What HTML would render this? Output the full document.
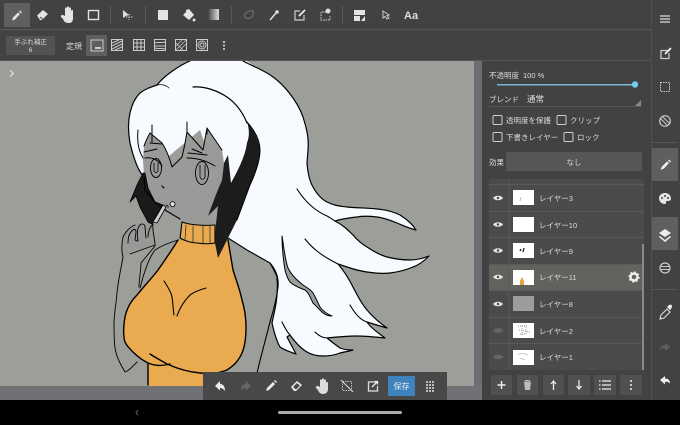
<!DOCTYPE html>
<html><head><meta charset="utf-8">
<style>
html,body{margin:0;padding:0;background:#000;width:680px;height:425px;overflow:hidden}
svg{display:block}
text{font-family:"Liberation Sans","Noto Sans CJK JP",sans-serif;fill:#dcdcdc}
.l{font-size:7.5px}
</style></head><body>
<svg width="680" height="425" viewBox="0 0 680 425" xmlns="http://www.w3.org/2000/svg">
<defs><clipPath id="c"><rect x="0" y="61" width="474" height="325"/></clipPath></defs>
<rect width="680" height="425" fill="#424242"/>
<!-- canvas -->
<rect x="0" y="61" width="482" height="339" fill="#6d6d75"/>
<rect x="0" y="386" width="482" height="14" fill="#6f7174"/>
<rect x="0" y="61" width="474" height="325" fill="#9c9e9a"/>
<g clip-path="url(#c)" stroke-linejoin="round" stroke-linecap="round">
<!-- white hair fill -->
<path d="M144 177C139 172 134 160 130 143C128 130 128 122 130 113C132 104 135 98 140 93C145 89 151 87 157 85C164 76 180 64 197 58H243C252 66 264 70 273 77C283 84 297 100 303 117C307 130 309 138 308 150L307 163C308 175 310 182 313 187C318 196 323 200 327 202C335 206 340 206 347 207C358 208 368 208 377 209C388 210 394 212 400 215C408 220 413 225 416 230C408 228 402 225 397 223C390 220 384 218 377 217C368 216 362 216 357 217C348 218 341 219 335 221C343 225 348 230 353 235C358 241 362 244 367 247C373 251 380 255 387 257C395 259 402 260 410 260C417 260 424 258 429 256C424 261 419 265 413 267C406 270 398 272 390 273C382 274 374 273 367 272C360 271 353 269 347 267L338 264C345 272 349 279 353 287C358 297 362 304 367 310C372 316 380 323 387 328C380 326 373 324 367 322C370 327 378 333 385 338C375 337 365 336 357 336C347 336 337 337 327 338C333 343 336 345 340 348C345 350 349 350 353 350C349 351 345 352 340 353C335 355 329 356 323 356C317 356 312 355 307 352C300 348 295 342 290 335L287 337L296 354C288 351 284 350 280 347C276 340 274 332 272 323C274 313 277 303 277 293C278 285 277 281 277 277C275 271 272 267 270 263L247 250L228 238L225 200L200 130Z" fill="#f7faff"/>
<!-- white hair outline -->
<path d="M144 177C139 172 134 160 130 143C128 130 128 122 130 113C132 104 135 98 140 93C145 89 151 87 157 85C164 76 180 64 197 58M243 61C252 66 264 70 273 77C283 84 297 100 303 117C307 130 309 138 308 150L307 163C308 175 310 182 313 187C318 196 323 200 327 202C335 206 340 206 347 207C358 208 368 208 377 209C388 210 394 212 400 215C408 220 413 225 416 230C408 228 402 225 397 223C390 220 384 218 377 217C368 216 362 216 357 217C348 218 341 219 335 221C343 225 348 230 353 235C358 241 362 244 367 247C373 251 380 255 387 257C395 259 402 260 410 260C417 260 424 258 429 256C424 261 419 265 413 267C406 270 398 272 390 273C382 274 374 273 367 272C360 271 353 269 347 267L338 264C345 272 349 279 353 287C358 297 362 304 367 310C372 316 380 323 387 328C380 326 373 324 367 322C370 327 378 333 385 338C375 337 365 336 357 336C347 336 337 337 327 338C333 343 336 345 340 348C345 350 349 350 353 350C349 351 345 352 340 353C335 355 329 356 323 356C317 356 312 355 307 352C300 348 295 342 290 335L287 337L296 354C288 351 284 350 280 347C276 340 274 332 272 323C274 313 277 303 277 293C278 285 277 281 277 277C275 271 272 267 270 263" fill="none" stroke="#000" stroke-width="1.200"/>
<!-- face -->
<path d="M144 177L143 160L144 146Q147 138 150 133L162 143Q168 152 172 167Q178 161 182 157Q185 145 187 132L203 150L207 128L222 150L224 163L222 180L215 197L208 216L216 224L182 222L165 210L155 202L145 190Z" fill="#9a9b99"/>
<path d="M150 133L162 143Q168 152 172 167Q178 161 182 157Q185 145 187 132L203 150L207 128L222 150" fill="none" stroke="#000" stroke-width="1"/>
<path d="M150 133Q147 138 144 146M138 130C137 140 138 150 143 158M152 125V142M187 122V132M207 128V134" fill="none" stroke="#000" stroke-width="1"/>
<path d="M150 143L162 144M144 152L157 149M145 158C151 157 158 159 162 166M188 153L207 155M187 158C197 158 207 161 215 166M192 149L202 153" fill="none" stroke="#000" stroke-width="1"/>
<ellipse cx="156" cy="168" rx="5.500" ry="9.500" fill="none" stroke="#000" stroke-width=".9"/>
<path d="M154 163V171C155 173 157 173 158 171V163" fill="none" stroke="#000" stroke-width=".8"/>
<ellipse cx="202" cy="173" rx="6.500" ry="11.500" fill="none" stroke="#000" stroke-width=".9"/>
<path d="M200 165V177C201 180 204 180 205 177V165" fill="none" stroke="#000" stroke-width=".8"/>
<path d="M162 186L164 188" stroke="#000" stroke-width="1.200"/>
<path d="M170 204C170 201 175 201 175 204C175 207 171 208 170 204Z" fill="#e4e4e4" stroke="#000" stroke-width=".8"/>
<path d="M166 205L168 206L168 208" fill="none" stroke="#000" stroke-width=".7"/>
<!-- hand, drawn before the dark strand -->
<path d="M123 257C121 250 122 242 123 237C126 231 130 227 135 225C137 224 139 224 140 225C141 223 144 222 146 224C148 222 151 222 153 224L155 245L130 254Z" fill="#999a98"/>
<path d="M123 257C121 250 122 242 123 237C126 231 130 227 135 225M128 243C128 238 129 234 131 232C133 229 136 228 136 232L135 240L137 241M138 241C137 235 137 228 140 225C142 223 145 224 145 227L146 238M148 237C148 231 150 227 153 224M153 224C152 232 155 238 155 245L130 254M123 257C121 268 118 282 117 293C116 305 114 315 114 323C114 332 114 340 115 348C116 354 118 359 120 363C122 367 124 370 125 372C129 371 133 366 137 362M155 246C150 252 146 257 141 263C141 270 139 280 139 287M178 240C168 243 161 246 155 250C149 258 146 268 143 277C142 281 141 285 140 288" fill="none" stroke="#000" stroke-width=".9"/>
<!-- black left strand -->
<path d="M143 173L137 185L130 202L136 196L140 207L148 222L152 224L163 205L155 202L148 188L145 173Z" fill="#1a1a1a" stroke="#000" stroke-width=".8"/>
<path d="M144 177L145 190L155 202L165 210L180 219" fill="none" stroke="#000" stroke-width="1.100"/>
<!-- finger -->
<path d="M163 205L166 207L157 223L153 222Z" fill="#cfcfcf" stroke="#000" stroke-width=".8"/>
<!-- arm line -->
<path d="M228 238L247 250L270 263C276 270 279 278 278 287C276 305 270 320 268 330C264 345 260 360 257 373" fill="none" stroke="#000" stroke-width="1.100"/>
<!-- orange -->
<path d="M178 240L215 243L228 240C230 250 232 260 233 270C236 280 240 290 242 300C245 310 246 320 246 327C246 338 245 346 242 353C238 362 233 366 227 370C220 373 210 374 203 373V386H148V363C142 360 138 357 133 352C128 347 124 343 124 337C123 330 124 323 125 317C127 307 132 300 137 295C145 285 152 278 158 270C165 260 172 250 178 240Z" fill="#eaab50"/>
<path d="M178 240C172 250 165 260 158 270C152 278 145 285 137 295C132 300 127 307 125 317C124 323 123 330 124 337C124 343 128 347 133 352C138 357 142 360 148 363V385M150 354C156 358 162 361 167 364C178 369 189 372 200 373C210 374 220 373 227 370C233 366 238 362 242 353C245 346 246 338 246 327C246 320 245 310 242 300C240 290 236 280 233 270L228 240M148 363C155 366 163 366 170 364" fill="none" stroke="#000" stroke-width="1.400"/>
<path d="M164 281C168 287 171 292 172 297C173 303 173 309 174 315M206 288C199 290 194 292 190 295C185 300 180 307 177 316" fill="none" stroke="#000" stroke-width="1.100"/>
<path d="M182 222C181 228 181 233 180 238C185 241 192 243 197 243C204 244 210 244 215 243V225C204 226 190 225 182 222Z" fill="#eaab50" stroke="#000" stroke-width="1.100"/>
<path d="M186 225L185 240M193 226L193 242M203 226V243M210 226V243" stroke="#333" stroke-width=".8"/>
<!-- black right piece -->
<path d="M228 155L224 163L222 180L215 197L208 216L218 206L216 224L215 243L218 258L227 240L237 220L250 185C256 172 260 160 260 150C259 140 254 130 247 122C249 128 250 135 247 143C245 157 238 170 231 183Z" fill="#1c1c1c"/>
<path d="M247 122C256 132 260 142 260 150C260 160 256 172 250 185L237 220" fill="none" stroke="#000" stroke-width="1"/>
<!-- hair detail lines -->
<path d="M193 87C205 86 218 91 227 97C237 104 243 113 247 123" fill="none" stroke="#000" stroke-width="1.200"/>
<path d="M157 85C162 84 166 85 169 88" fill="none" stroke="#000" stroke-width=".7"/>
<path d="M297 189C304 200 313 210 327 216C331 218 333 220 335 221" fill="none" stroke="#000" stroke-width="1.100"/>
<path d="M305 239C313 249 322 256 338 264" fill="none" stroke="#000" stroke-width="1.100"/>
<path d="M282 236C284 248 285 260 288 268C292 276 298 281 303 285C308 288 311 290 313 293C316 298 318 303 320 307C323 311 327 314 332 316C328 316 325 315 322 312C318 308 316 306 313 303C310 297 309 293 305 290C300 288 294 286 290 282C287 278 286 274 285 270C283 258 282 246 282 236Z" fill="#9c9e9a" stroke="#000" stroke-width="1"/>
<path d="M350 305C354 312 360 320 367 322M282 322C285 328 288 333 290 335M315 332C319 336 323 338 327 338" fill="none" stroke="#000" stroke-width="1.100"/>
</g>
<!-- toolbar chrome -->
<rect x="0" y="29" width="651" height="1.200" fill="#565656"/>
<rect x="0" y="60" width="651" height="1" fill="#555"/>
<rect x="651" y="0" width="1" height="400" fill="#4e4e4e"/>
<rect x="4" y="3" width="26" height="24" fill="#5f605e"/>
<rect x="110" y="6" width="1" height="18" fill="#5a5a5a"/>
<rect x="145" y="6" width="1" height="18" fill="#5a5a5a"/>
<rect x="231" y="6" width="1" height="18" fill="#5a5a5a"/>
<rect x="342" y="6" width="1" height="18" fill="#5a5a5a"/>
<g fill="#e4e4e4" stroke="none">
<path d="M13 17.500L12 20.500L15 19.500L20 14L18 12.500ZM19 11.500L21 13.500L22 12.500L20 10.500Z"/>
<path d="M37 15.500L43 10L48 14L42 20H40Z"/>
<path d="M61 17L63 19C64 22 66 23 69 23C72 23 73 21 73 18V11C73 9.500 71.500 9.500 71 11V8.500C71 7 69 7 69 8.500V7.500C69 6 67 6 67 7.500V8.500C67 7 65 7 65 8.500V16L63 15C62 14.500 60.500 15.500 61 17Z"/>
<rect x="158" y="10" width="10" height="10"/>
<path d="M189 9L194 15L189 20L183 15L186 12L186 10ZM194 18.500A1.500 1.500 0 1 0 194.100 18.500"/>
<path d="M354 10H365V15H354ZM354 16H360V21H354ZM361 21L365 16V21Z"/>
</g>
<path d="M40 17L43 19.500" stroke="#444" stroke-width="1"/>
<defs><linearGradient id="g"><stop offset="0" stop-color="#555"/><stop offset="1" stop-color="#ddd"/></linearGradient></defs>
<rect x="209" y="9" width="10" height="11" fill="url(#g)"/>
<rect x="88.500" y="10.500" width="10" height="9" fill="none" stroke="#e0e0e0" stroke-width="1.400"/>
<path d="M123 10L123 18L126 16L129 15Z" fill="#ddd"/>
<path d="M129 14V20M126 17H133" stroke="#ccc" stroke-width="1" stroke-dasharray="1.500 1" fill="none"/>
<path d="M245 17C243 13 250 10 253 11C255 12 252 14 253 15C252 18 247 20 245 17Z" fill="none" stroke="#777" stroke-width="1"/>
<path d="M270 20L276 13" stroke="#ddd" stroke-width="1.500"/><circle cx="277" cy="12" r="1.800" fill="#ddd"/>
<path d="M300 11H295V20H304V15" fill="none" stroke="#ccc" stroke-width="1.200"/><path d="M299 16L305 10" stroke="#eee" stroke-width="1.800"/>
<path d="M326 12H321V20H330V16" fill="none" stroke="#bbb" stroke-width="1.200" stroke-dasharray="1.500 1"/><circle cx="328" cy="11" r="2.500" fill="#ddd"/>
<path d="M383 11L383 18L385 16.500L387 19L389 18L387 15.500L389 15Z" fill="none" stroke="#ccc" stroke-width="1"/>
<text x="404" y="19" style="font-size:11px;font-weight:bold">Aa</text>
<!-- second row -->
<rect x="6" y="36" width="49" height="19" fill="#535353"/>
<text x="30.500" y="44" text-anchor="middle" style="font-size:6.500px">手ぶれ補正</text>
<text x="30.500" y="52" text-anchor="middle" style="font-size:6.500px">6</text>
<text x="66" y="49" style="font-size:8px">定規</text>
<rect x="86" y="35" width="21" height="21" fill="#5f605e"/>
<rect x="91" y="40" width="12" height="11" fill="none" stroke="#ccc"/><path d="M95 48H101" stroke="#ccc" stroke-width="2"/>
<g fill="none" stroke="#ccc" stroke-width="1">
<rect x="111.500" y="39.500" width="11" height="11"/><path d="M112 43L119 40M112 46L122 41M112 49L122 44M115 50L122 47"/>
<rect x="133.500" y="39.500" width="11" height="11"/><path d="M137 40V50M141 40V50M134 43H144M134 47H144"/>
<rect x="154.500" y="39.500" width="11" height="11"/><path d="M155 43C158 42 162 43 165 42M155 46H165M155 48C158 49 162 48 165 49"/>
<rect x="175.500" y="39.500" width="11" height="11"/><path d="M176 50L186 40M176 46L182 40M180 50L186 44M176 43L183 50" stroke-width=".7"/>
<rect x="196.500" y="39.500" width="11" height="11"/><circle cx="202" cy="45" r="4"/><circle cx="202" cy="45" r="2"/>
</g>
<g fill="#e0e0e0"><circle cx="224" cy="42" r="1"/><circle cx="224" cy="45.500" r="1"/><circle cx="224" cy="49" r="1"/></g>
<path d="M10 70.500L13.500 73.500L10 76.500" fill="none" stroke="#ddd" stroke-width="1.200"/>
<!-- right bar -->
<path d="M660 16H670M660 19H670M660 22H670" stroke="#ddd" stroke-width="1.300"/>
<path d="M670 50.500H661V58.500H669V53" fill="none" stroke="#ccc" stroke-width="1.300"/><path d="M665 54L671 48" stroke="#eee" stroke-width="1.800"/>
<rect x="660.500" y="82.500" width="9" height="9" fill="none" stroke="#ccc" stroke-dasharray="1.500 1"/>
<circle cx="665" cy="121" r="5.300" fill="none" stroke="#ccc" stroke-width="1.200"/><path d="M660.500 118.500L667.500 125.500M662.500 116.500L669.500 123.500" stroke="#ccc" stroke-width="1"/>
<rect x="652" y="142" width="26" height="1" fill="#555"/>
<rect x="652" y="148" width="26" height="33" fill="#5f605e"/>
<path d="M662 166.500L660.500 170L664 168.500L669 163L667 161.500ZM668 160.500L670 162.500L671 161.500L669 159.500Z" fill="#eee"/>
<path d="M665 193C669 193 671 196 671 199C671 201 668 201 667 201C665 201 667 204 665 204C661 204 659 201 659 198C659 195 662 193 665 193Z" fill="#e6e6e6"/>
<circle cx="662" cy="198" r="1" fill="#444"/><circle cx="665" cy="196" r="1" fill="#444"/><circle cx="668" cy="198" r="1" fill="#444"/>
<rect x="652" y="217" width="26" height="33" fill="#5f605e"/>
<path d="M665 229L671 233L665 237L659 233Z" fill="#eee"/><path d="M660 236L665 240L670 236L671 237L665 242L659 237Z" fill="#eee"/>
<circle cx="665" cy="268" r="5" fill="none" stroke="#ccc" stroke-width="1.200"/><path d="M661 266.500H669M661 269.500H669" stroke="#ccc" stroke-width="1"/>
<rect x="652" y="289" width="26" height="1" fill="#555"/>
<path d="M661 315L667 309L670 312L664 318L660 319Z" fill="none" stroke="#ddd" stroke-width="1.100"/><path d="M667 307L669 305C671 304 672 305 672 306C672 308 671 309 670 310Z" fill="#eee"/>
<path d="M670 347L665 343V345.500C662 345.500 660 347 660 350C662 348 664 348 665 348.500V351Z" fill="#5e5e5e"/>
<path d="M660 380L665 376V378.500C668 378.500 670 380 670 383.500C668 381.500 666 381.500 665 382V384.500Z" fill="#eee"/>
<!-- panel -->
<text x="489" y="78" class="l">不透明度</text><text x="523" y="78" class="l">100 %</text>
<rect x="497" y="84" width="138" height="1.500" fill="#74b8d8"/><circle cx="635" cy="84.500" r="3.200" fill="#74ccf2"/>
<text x="489" y="102" class="l">ブレンド</text><text x="527" y="102" style="font-size:8.500px">通常</text>
<rect x="489" y="106" width="152" height="1" fill="#555"/><path d="M641 100V106H635Z" fill="#888"/>
<g fill="none" stroke="#ccc" stroke-width="1">
<rect x="493" y="115.500" width="9" height="9" rx="1"/><rect x="557" y="115.500" width="9" height="9" rx="1"/>
<rect x="493" y="132.500" width="9" height="9" rx="1"/><rect x="564" y="132.500" width="9" height="9" rx="1"/>
</g>
<text x="506" y="123" class="l">透明度を保護</text><text x="570" y="123" class="l">クリップ</text>
<text x="506" y="140" class="l">下書きレイヤー</text><text x="577" y="140" class="l">ロック</text>
<text x="489" y="165" class="l">効果</text>
<rect x="506" y="152" width="136" height="19" fill="#565656"/>
<text x="574" y="165" text-anchor="middle" class="l">なし</text>
<!-- layers -->
<rect x="489" y="179" width="155" height="191" fill="#4b4b4b"/>
<rect x="489" y="264" width="155" height="27" fill="#62635f"/>
<g fill="#5a5a5a">
<rect x="489" y="184" width="155" height="1"/><rect x="489" y="211" width="155" height="1"/><rect x="489" y="237" width="155" height="1"/><rect x="489" y="264" width="155" height="1"/><rect x="489" y="290" width="155" height="1"/><rect x="489" y="317" width="155" height="1"/><rect x="489" y="343" width="155" height="1"/>
<rect x="508.500" y="179" width="1" height="191"/>
</g>
<rect x="642" y="244" width="2" height="126" fill="#8a8a8a"/>
<g fill="#fff">
<rect x="513" y="190" width="21" height="15"/><rect x="513" y="217" width="21" height="15"/><rect x="513" y="243" width="21" height="15"/><rect x="513" y="270" width="21" height="15"/><rect x="513" y="323" width="21" height="15"/><rect x="513" y="350" width="21" height="15"/>
</g>
<rect x="513" y="296" width="21" height="15" fill="#9c9c9a"/>
<path d="M520 285V281L522 277L524 281V285Z" fill="#eaa040"/>
<path d="M520 251L521 249M523 252L524 248" stroke="#111" stroke-width="1.200"/>
<path d="M520 201L521 197" stroke="#bbb"/>
<path d="M518 326H528M519 330L530 332M520 334H526M522 326V336M526 325V335" stroke="#999" stroke-dasharray="1 1" fill="none"/>
<path d="M518 354C522 353 526 354 528 355M520 358L525 360" stroke="#ccc" fill="none"/>
<g fill="#e4e4e4">
<path d="M493 198C495 195 501 195 503 198C501 201 495 201 493 198Z"/><path d="M493 224.500C495 221.500 501 221.500 503 224.500C501 227.500 495 227.500 493 224.500Z"/><path d="M493 250.500C495 247.500 501 247.500 503 250.500C501 253.500 495 253.500 493 250.500Z"/><path d="M493 277C495 274 501 274 503 277C501 280 495 280 493 277Z"/><path d="M493 304C495 301 501 301 503 304C501 307 495 307 493 304Z"/>
</g>
<g fill="#666">
<path d="M493 330.500C495 327.500 501 327.500 503 330.500C501 333.500 495 333.500 493 330.500Z"/><path d="M493 357C495 354 501 354 503 357C501 360 495 360 493 357Z"/>
</g>
<g fill="#4b4b4b"><circle cx="498" cy="198" r="1.200"/><circle cx="498" cy="224.500" r="1.200"/><circle cx="498" cy="250.500" r="1.200"/><circle cx="498" cy="277" r="1.200"/><circle cx="498" cy="304" r="1.200"/></g>
<text x="539" y="201" class="l">レイヤー3</text><text x="539" y="228" class="l">レイヤー10</text><text x="539" y="254" class="l">レイヤー9</text><text x="539" y="280" class="l">レイヤー11</text><text x="539" y="307" class="l">レイヤー8</text><text x="539" y="334" class="l">レイヤー2</text><text x="539" y="360" class="l">レイヤー1</text>
<circle cx="634" cy="277" r="3.500" fill="none" stroke="#f0f0f0" stroke-width="2.400"/><circle cx="634" cy="277" r="5" fill="none" stroke="#f0f0f0" stroke-width="1.300" stroke-dasharray="1.800 2.100"/>
<g fill="#505050">
<rect x="491" y="375" width="21" height="20" rx="1"/><rect x="517" y="375" width="21" height="20" rx="1"/><rect x="543" y="375" width="21" height="20" rx="1"/><rect x="568" y="375" width="22" height="20" rx="1"/><rect x="594" y="375" width="22" height="20" rx="1"/><rect x="620" y="375" width="22" height="20" rx="1"/>
</g>
<path d="M497.500 385H505.500M501.500 381V389" stroke="#eee" stroke-width="1.400"/>
<path d="M524 381.500H531L530 390H525Z" fill="#bbb"/><rect x="525" y="380" width="5" height="1" fill="#bbb"/>
<path d="M553.500 390V382M551 384L553.500 381L556 384" fill="none" stroke="#eee" stroke-width="1.300"/>
<path d="M579 380V388M576.500 386L579 389L581.500 386" fill="none" stroke="#eee" stroke-width="1.300"/>
<path d="M602 381H611M602 385H611M602 389H611" stroke="#eee" stroke-width="1.200"/><path d="M599 381H600.500M599 385H600.500M599 389H600.500" stroke="#eee" stroke-width="1.200"/>
<g fill="#eee"><circle cx="631" cy="381" r="1"/><circle cx="631" cy="385" r="1"/><circle cx="631" cy="389" r="1"/></g>
<!-- floating toolbar -->
<rect x="203" y="372" width="244" height="28" fill="#484848"/>
<path d="M215 386L220 381V384C223 384 225 386 225 391C223 388.500 221.500 388 220 388V390.500Z" fill="#eee"/>
<path d="M251 386L246 381V384C243 384 241 386 241 391C243 388.500 244.500 388 246 388V390.500Z" fill="#666"/>
<path d="M267 388L266 391L269 390L275 384L273 382ZM274 381L276 383L277 382L275 380Z" fill="#eee"/>
<path d="M291 387L297 381L302 385L296 391H294Z" fill="#eee"/><path d="M293 387L296 389.500L300 385.500L297 383Z" fill="#484848"/>
<path d="M316 388L318 390C319 393 321 394 323 394C326 394 328 392 328 389V383C328 381.500 326.500 381.500 326 383V380.500C326 379 324 379 324 380.500V379.500C324 378 322 378 322 379.500V380.500C322 379 320 379 320 380.500V387L318 386C317 385.500 315.500 386.500 316 388Z" fill="#ddd"/>
<rect x="342.500" y="381.500" width="9" height="9" fill="none" stroke="#bbb" stroke-dasharray="1.500 1"/><path d="M341 380L353 392" stroke="#ddd" stroke-width="1"/>
<path d="M377 382H368.500V391H377.500V386" fill="none" stroke="#ddd" stroke-width="1.300"/><path d="M372 387L377.500 381.500M374.500 381.500H377.500V384.500" fill="none" stroke="#eee" stroke-width="1.300"/>
<rect x="388" y="376" width="27" height="20" fill="#3f83bd"/>
<text x="401.500" y="389" text-anchor="middle" style="font-size:8px;fill:#e8f0f6">保存</text>
<g fill="#bbb">
<rect x="426" y="381" width="2" height="2"/><rect x="429" y="381" width="2" height="2"/><rect x="432" y="381" width="2" height="2"/>
<rect x="426" y="384" width="2" height="2"/><rect x="429" y="384" width="2" height="2"/><rect x="432" y="384" width="2" height="2"/>
<rect x="426" y="387" width="2" height="2"/><rect x="429" y="387" width="2" height="2"/><rect x="432" y="387" width="2" height="2"/>
<rect x="426" y="390" width="2" height="2"/><rect x="429" y="390" width="2" height="2"/><rect x="432" y="390" width="2" height="2"/>
</g>
<!-- nav -->
<rect x="0" y="400" width="680" height="25" fill="#000"/>
<path d="M138 410L136 412.500L138 415" fill="none" stroke="#666" stroke-width="1"/>
<rect x="278" y="411" width="124" height="3" rx="1.500" fill="#aaa"/>
</svg>
</body></html>
